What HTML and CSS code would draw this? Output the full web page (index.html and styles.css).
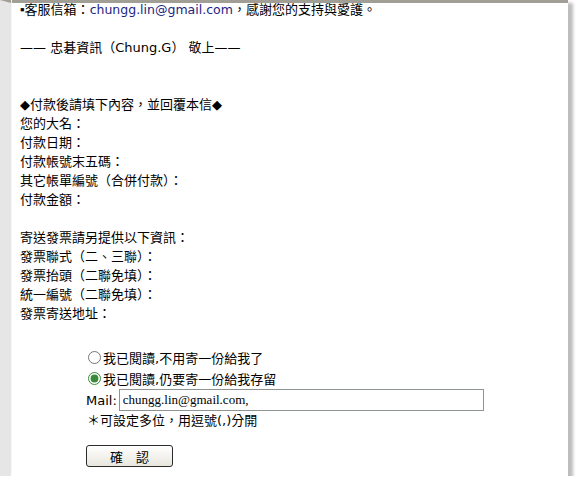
FILE: index.html
```html
<!DOCTYPE html>
<html lang="zh-Hant">
<head>
<meta charset="UTF-8">
<title>付款回覆</title>
<link rel="stylesheet" href="styles.css">
</head>
<body>

<div class="frame">
    <div class="sheet">
        <div class="letter">
            <p><span class="dot">▪</span>客服信箱：<span class="mail-link">chungg.lin@gmail.com</span>，感謝您的支持與愛護。</p>
            <p>&nbsp;</p>
            <p>—— 忠碁資訊（Chung.G） 敬上——</p>
            <p>&nbsp;</p>
            <p>&nbsp;</p>
            <p>◆付款後請填下內容，並回覆本信◆</p>
            <p>您的大名：</p>
            <p>付款日期：</p>
            <p>付款帳號末五碼：</p>
            <p>其它帳單編號（合併付款）：</p>
            <p>付款金額：</p>
            <p>&nbsp;</p>
            <p>寄送發票請另提供以下資訊：</p>
            <p>發票聯式（二、三聯）：</p>
            <p>發票抬頭（二聯免填）：</p>
            <p>統一編號（二聯免填）：</p>
            <p>發票寄送地址：</p>
        </div>

        <form class="copy-form">
            <label class="choice"><input type="radio" name="copy"> 我已閱讀,不用寄一份給我了</label>
            <label class="choice"><input type="radio" name="copy" checked> 我已閱讀,仍要寄一份給我存留</label>
            <div class="mail-row">
                <span class="mail-label">Mail:</span>
                <input type="text" class="mail-input" value="chungg.lin@gmail.com,">
            </div>
            <div class="note">＊可設定多位，用逗號(,)分開</div>
            <button type="button" class="confirm">確　認</button>
        </form>
    </div>
</div>

</body>
</html>
```

FILE: styles.css
```css
body {
    margin: 0;
    background-color: #fff;
    font-family: "DejaVu Sans", "Noto Sans CJK TC", sans-serif;
    font-size: 13px;
    color: #000;
}
.frame {
    width: 568px;
    height: 476px;
    border-top: 3px solid #a19f95;
    border-left: 11px solid #e6e6e6;
    box-sizing: border-box;
    box-shadow: 5px 3px 3px #bdbdbd;
    background-color: #fff;
}
.sheet {
    border-left: 1px solid #f4f4f4;
    height: 100%;
    padding: 0 0 0 8px;
    box-sizing: border-box;
}
.letter {
    margin-top: -3px;
}
.letter p {
    margin: 0;
    line-height: 19px;
    height: 19px;
    white-space: nowrap;
}
.dot {
    font-family: "Liberation Sans", sans-serif;
}
.mail-link {
    color: #1c2585;
    font-size: 12.5px;
}
.copy-form {
    margin-top: 24px;
    padding-left: 66px;
    display: flex;
    flex-direction: column;
    align-items: flex-start;
}
.choice {
    display: flex;
    align-items: center;
    height: 21px;
    margin-left: 2px;
}
.choice input {
    width: 13px;
    height: 13px;
    margin: 0 2px 0 0;
    accent-color: #3a8a3a;
}
.mail-row {
    display: flex;
    align-items: center;
    gap: 2px;
    height: 22px;
}
.mail-input {
    width: 365px;
    height: 22px;
    box-sizing: border-box;
    border: 1px solid #8d9491;
    padding: 0 3px;
    font-family: "Liberation Serif", serif;
    font-size: 13px;
    outline: none;
}
.note {
    line-height: 20px;
    margin-left: 1px;
}
.confirm {
    margin-top: 14px;
    width: 87px;
    height: 22px;
    border: 1px solid #2b2b2b;
    border-radius: 3px;
    background: linear-gradient(#ffffff, #e8e6dd);
    font-family: "Noto Sans CJK TC", sans-serif;
    font-size: 13px;
    padding: 0;
    cursor: pointer;
}
```
